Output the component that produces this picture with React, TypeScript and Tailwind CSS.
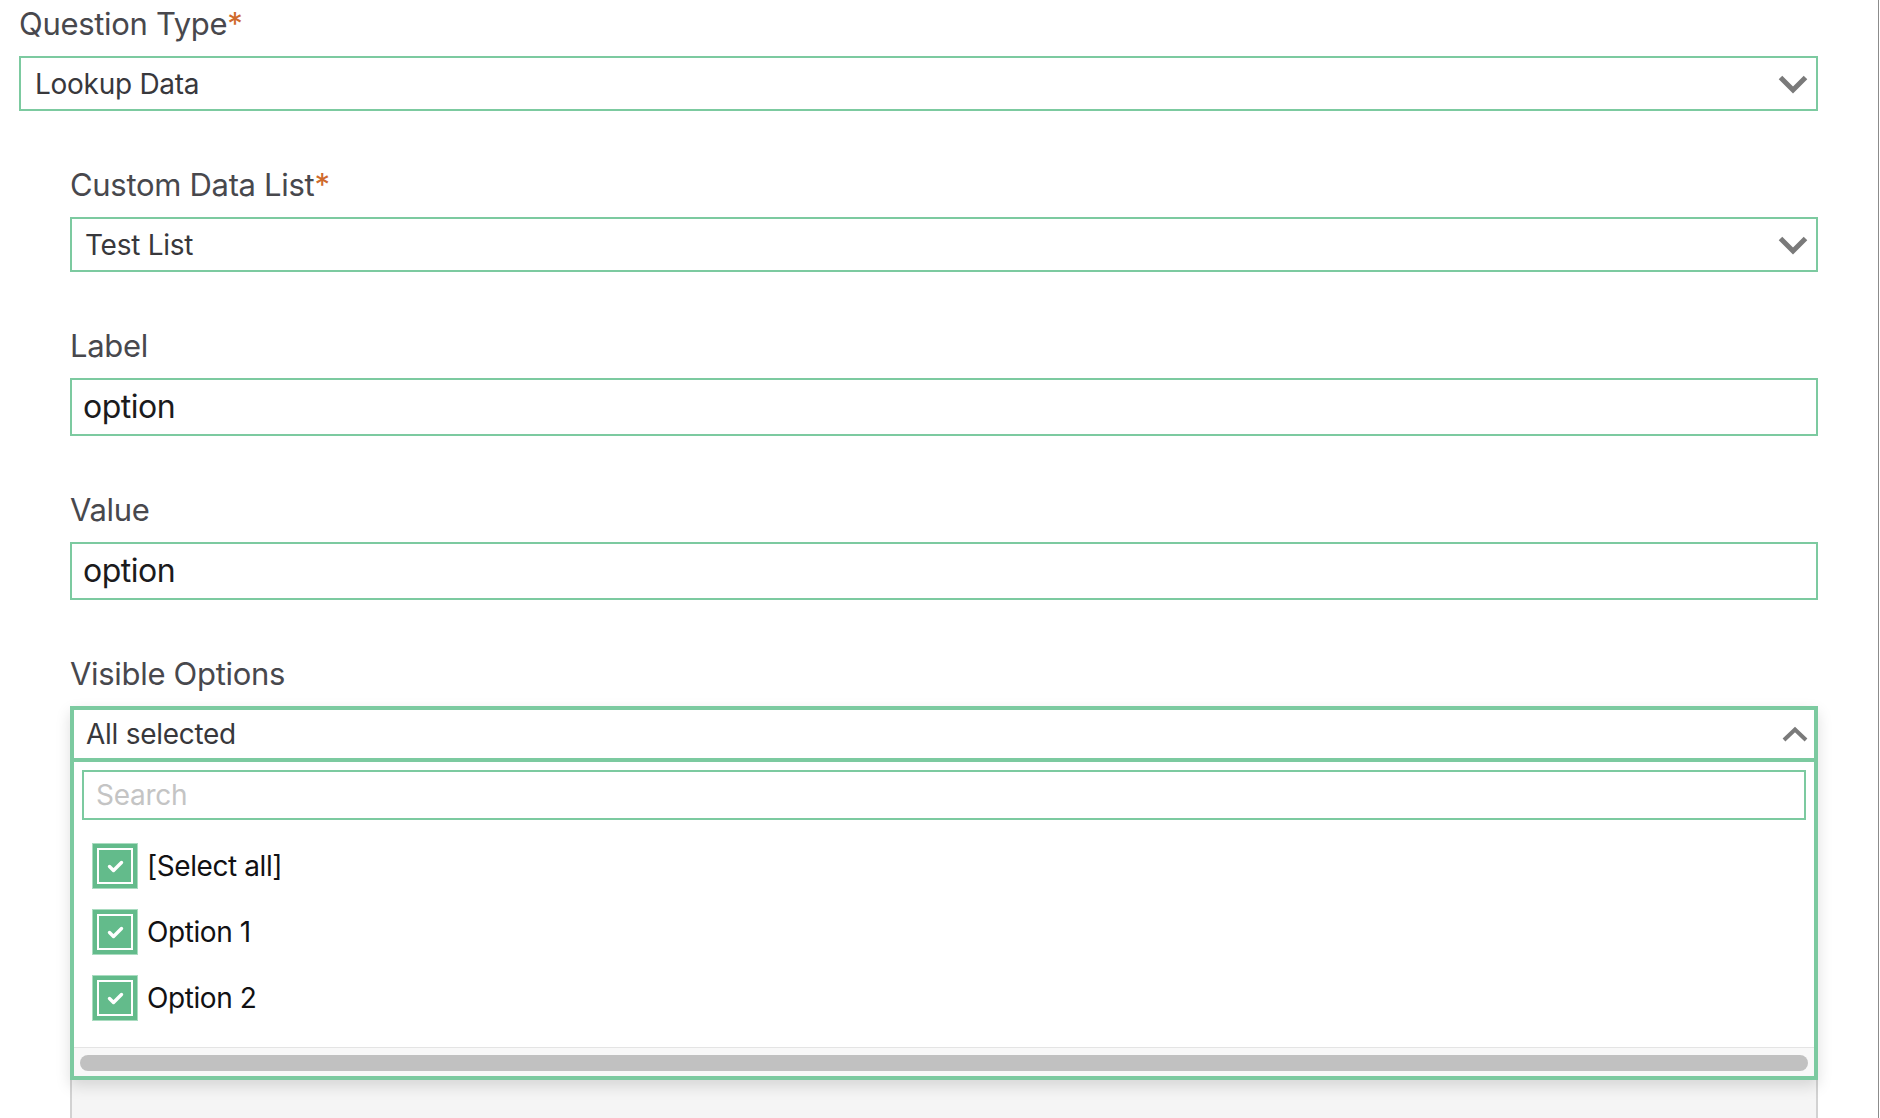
import React from 'react';

const TEXT = {
  questionType: 'Question Type',
  lookupData: 'Lookup Data',
  customDataList: 'Custom Data List',
  testList: 'Test List',
  label: 'Label',
  value: 'Value',
  option: 'option',
  visibleOptions: 'Visible Options',
  allSelected: 'All selected',
  search: 'Search',
} as const;

const OPTIONS = ['[Select all]', 'Option 1', 'Option 2'];

function ChevronDown() {
  return (
    <svg width="30" height="20" viewBox="0 0 30 20" fill="none">
      <path d="M2.5 3.5 L15 16 L27.5 3.5" stroke="#7a7a7a" strokeWidth="5" />
    </svg>
  );
}

function ChevronUp() {
  return (
    <svg width="26" height="17" viewBox="0 0 26 17" fill="none">
      <path d="M2 14 L13 3.5 L24 14" stroke="#7a7a7a" strokeWidth="4" />
    </svg>
  );
}

function FieldLabel({ text, required }: { text: string; required?: boolean }) {
  return (
    <div className="h-[38px] text-[31px] leading-[38px] tracking-[-0.01em] text-[#48484d]">
      {text}
      {required && <span className="text-[#cf6a2c]">*</span>}
    </div>
  );
}

function SelectBox({ value, padLeft }: { value: string; padLeft: string }) {
  return (
    <div
      className={`mt-[13px] flex h-[55px] items-center justify-between border-2 border-[#7ccaa0] pr-[8px] text-[28px] tracking-[-0.01em] text-[#38383c] ${padLeft}`}
    >
      <span>{value}</span>
      <ChevronDown />
    </div>
  );
}

function TextBox({ value }: { value: string }) {
  return (
    <div className="mt-[13px] flex h-[58px] items-center border-2 border-[#7ccaa0] pl-[11px] text-[32px] tracking-[-0.015em] text-[#1b1b1d]">
      {value}
    </div>
  );
}

function Checkbox() {
  return (
    <div className="flex h-[46px] w-[46px] items-center justify-center border border-[#a9dcc0] bg-[#63bb8b] p-[4px]">
      <div className="flex h-full w-full items-center justify-center border-2 border-white bg-[#63bb8b]">
        <svg width="17" height="13" viewBox="0 0 17 13" fill="none">
          <path d="M2.5 6.5 L6.5 10.5 L14.5 2.5" stroke="white" strokeWidth="3.4" strokeLinecap="round" strokeLinejoin="round" />
        </svg>
      </div>
    </div>
  );
}

export default function App() {
  return (
    <div className="flex h-[1118px] w-[1880px] overflow-hidden bg-white font-['Inter',sans-serif]">
      <div className="w-[1878px] pl-[19px] pt-[5px]">
        <div className="w-[1799px]">
          <FieldLabel text={TEXT.questionType} required />
          <SelectBox value={TEXT.lookupData} padLeft="pl-[14px]" />

          <div className="ml-[51px]">
            <div className="pt-[55px]">
              <FieldLabel text={TEXT.customDataList} required />
              <SelectBox value={TEXT.testList} padLeft="pl-[13px]" />
            </div>

            <div className="pt-[55px]">
              <FieldLabel text={TEXT.label} />
              <TextBox value={TEXT.option} />
            </div>

            <div className="pt-[55px]">
              <FieldLabel text={TEXT.value} />
              <TextBox value={TEXT.option} />
            </div>

            <div className="pt-[55px]">
              <FieldLabel text={TEXT.visibleOptions} />
              <div className="relative z-10 mt-[13px] border-4 border-[#7ccaa0] bg-white shadow-[0_6px_14px_rgba(0,0,0,0.13)]">
                <div className="flex h-[48px] items-center justify-between pl-[12px] pr-[6px] text-[28px] tracking-[-0.01em] text-[#38383c]">
                  <span>{TEXT.allSelected}</span>
                  <ChevronUp />
                </div>
                <div className="border-t-4 border-[#7ccaa0]">
                  <div className="px-[8px] pt-[8px]">
                    <div className="flex h-[50px] items-center border-2 border-[#7ccaa0] pl-[12px] text-[28px] tracking-[-0.01em] text-[#c4c4c4]">
                      {TEXT.search}
                    </div>
                  </div>
                  <div className="flex flex-col gap-[20px] pl-[18px] pt-[23px]">
                    {OPTIONS.map((opt) => (
                      <div key={opt} className="flex h-[46px] items-center gap-[9px]">
                        <Checkbox />
                        <span className="text-[28px] tracking-[-0.015em] text-[#111113]">{opt}</span>
                      </div>
                    ))}
                  </div>
                  <div className="mt-[26px] h-[29px] border-t border-[#e4e4e4] bg-[#f8f8f8] px-[6px] pt-[7px]">
                    <div className="h-[16px] rounded-full bg-[#c1c1c1]" />
                  </div>
                </div>
              </div>
              <div className="h-[80px] border-x-2 border-[#d2d2d2] bg-[#f5f5f5]" />
            </div>
          </div>
        </div>
      </div>
      <div className="h-full w-px bg-[#8c8c8c]" />
      <div className="h-full w-px bg-white" />
    </div>
  );
}
